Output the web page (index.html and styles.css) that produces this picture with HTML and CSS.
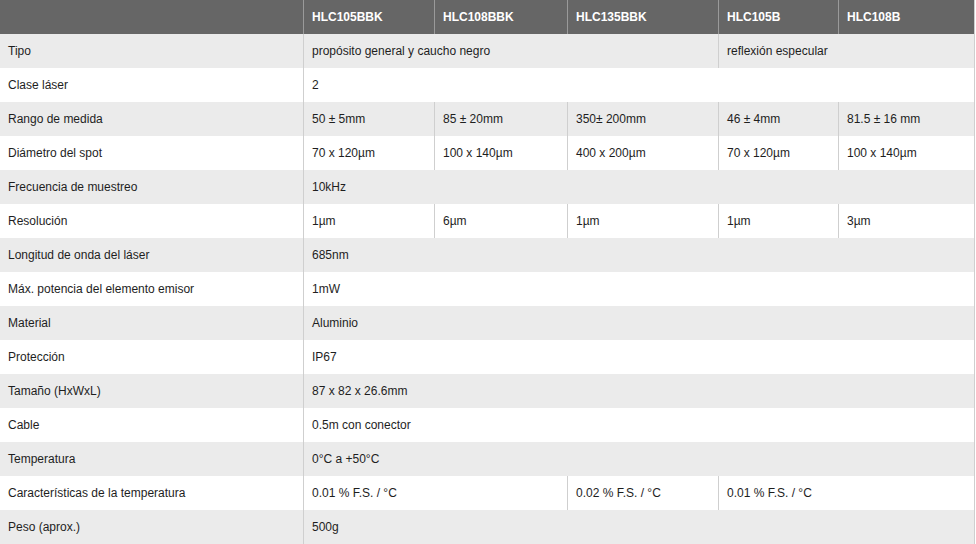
FILE: index.html
```html
<!DOCTYPE html>
<html lang="es">
<head>
<meta charset="utf-8">
<title>Especificaciones</title>
<link rel="stylesheet" href="styles.css">
</head>
<body>
<table class="spec">
  <colgroup>
    <col class="c-label">
    <col class="c-a">
    <col class="c-b">
    <col class="c-c">
    <col class="c-d">
    <col class="c-e">
  </colgroup>
  <thead>
    <tr>
      <th></th>
      <th>HLC105BBK</th>
      <th>HLC108BBK</th>
      <th>HLC135BBK</th>
      <th>HLC105B</th>
      <th>HLC108B</th>
    </tr>
  </thead>
  <tbody>
    <tr class="alt"><td>Tipo</td><td colspan="3">propósito general y caucho negro</td><td colspan="2">reflexión especular</td></tr>
    <tr><td>Clase láser</td><td colspan="5">2</td></tr>
    <tr class="alt"><td>Rango de medida</td><td>50 ± 5mm</td><td>85 ± 20mm</td><td>350± 200mm</td><td>46 ± 4mm</td><td>81.5 ± 16 mm</td></tr>
    <tr><td>Diámetro del spot</td><td>70 x 120µm</td><td>100 x 140µm</td><td>400 x 200µm</td><td>70 x 120µm</td><td>100 x 140µm</td></tr>
    <tr class="alt"><td>Frecuencia de muestreo</td><td colspan="5">10kHz</td></tr>
    <tr><td>Resolución</td><td>1µm</td><td>6µm</td><td>1µm</td><td>1µm</td><td>3µm</td></tr>
    <tr class="alt"><td>Longitud de onda del láser</td><td colspan="5">685nm</td></tr>
    <tr><td>Máx. potencia del elemento emisor</td><td colspan="5">1mW</td></tr>
    <tr class="alt"><td>Material</td><td colspan="5">Aluminio</td></tr>
    <tr><td>Protección</td><td colspan="5">IP67</td></tr>
    <tr class="alt"><td>Tamaño (HxWxL)</td><td colspan="5">87 x 82 x 26.6mm</td></tr>
    <tr><td>Cable</td><td colspan="5">0.5m con conector</td></tr>
    <tr class="alt"><td>Temperatura</td><td colspan="5">0°C a +50°C</td></tr>
    <tr><td>Características de la temperatura</td><td colspan="2">0.01 % F.S. / °C</td><td>0.02 % F.S. / °C</td><td colspan="2">0.01 % F.S. / °C</td></tr>
    <tr class="alt"><td>Peso (aprox.)</td><td colspan="5">500g</td></tr>
  </tbody>
</table>
</body>
</html>
```
FILE: styles.css
```css
html, body {
  margin: 0;
  padding: 0;
  background: #ffffff;
}

.spec {
  border-collapse: separate;
  border-spacing: 0;
  table-layout: fixed;
  width: 975px;
  border-right: 1px solid #cfcfcf;
  font-family: "Liberation Sans", Arial, Helvetica, sans-serif;
  font-size: 12px;
  color: #1e1e1e;
}

.c-label { width: 303px; }
.c-a { width: 131px; }
.c-b { width: 133px; }
.c-c { width: 151px; }
.c-d { width: 120px; }
.c-e { width: 136px; }

.spec th,
.spec td {
  box-sizing: border-box;
  height: 34px;
  padding: 0 8px;
  text-align: left;
  vertical-align: middle;
  white-space: nowrap;
}

.spec th + th,
.spec td + td {
  border-left: 1px solid #cfcfcf;
}

.spec thead th {
  background: #666666;
  color: #ffffff;
  font-weight: bold;
}

.spec thead th + th {
  border-left-color: #9a9a9a;
}

.spec tbody tr.alt td {
  background: #ebebeb;
}
```
